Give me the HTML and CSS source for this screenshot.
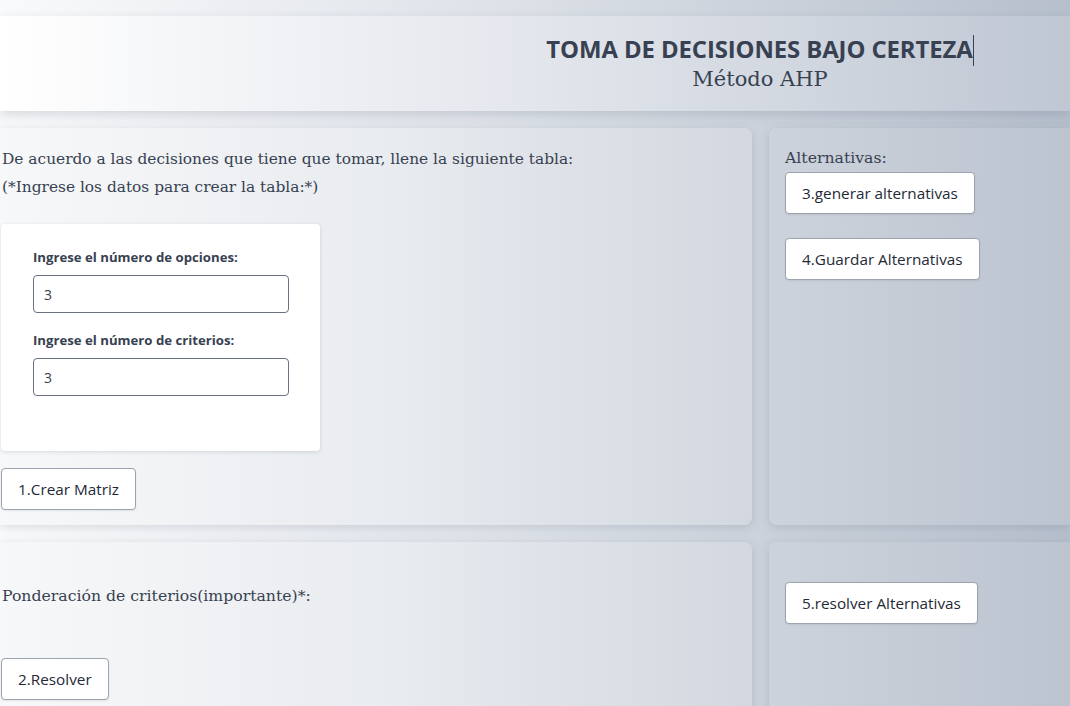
FILE: index.html
```html
<!DOCTYPE html>
<html lang="es">
<head>
<meta charset="utf-8">
<title>AHP</title>
<link rel="stylesheet" href="styles.css">
</head>
<body>
<header class="header">
  <div class="header-text">
    <h1 class="title">TOMA DE DECISIONES BAJO CERTEZA<span class="caret"></span></h1>
    <p class="subtitle">Método AHP</p>
  </div>
</header>
<main class="grid">
  <section class="card card-left">
    <p class="intro">De acuerdo a las decisiones que tiene que tomar, llene la siguiente tabla:<br>(*Ingrese los datos para crear la tabla:*)</p>
    <form class="form-box">
      <label class="label">Ingrese el número de opciones:</label>
      <input class="input" type="text" value="3">
      <label class="label label-2">Ingrese el número de criterios:</label>
      <input class="input" type="text" value="3">
    </form>
    <button class="btn">1.Crear Matriz</button>
  </section>
  <section class="card card-right">
    <p class="alt-title">Alternativas:</p>
    <button class="btn">3.generar alternativas</button>
    <button class="btn btn-gap">4.Guardar Alternativas</button>
  </section>
  <section class="card card-left card-bottom">
    <p class="pond">Ponderación de criterios(importante)*:</p>
    <button class="btn btn-resolver">2.Resolver</button>
  </section>
  <section class="card card-right card-bottom">
    <button class="btn btn-five">5.resolver Alternativas</button>
  </section>
</main>
</body>
</html>
```

FILE: styles.css
```css
html, body {
  margin: 0;
  padding: 0;
}
body {
  width: 1070px;
  height: 706px;
  overflow: hidden;
  background: linear-gradient(90deg, #f9fafb 0%, #dfe3e9 45%, #b6bfcc 100%);
  color: #374151;
  font-family: "DejaVu Serif", Georgia, serif;
}
.header {
  margin-top: 16px;
  height: 95px;
  background: linear-gradient(90deg, #ffffff 0%, #e3e6ec 50%, #bfc7d3 100%);
  box-shadow: 0 4px 10px rgba(71, 85, 105, 0.18);
  display: flex;
}
.header-text {
  padding-left: 450px;
  width: 620px;
  text-align: center;
}
.title {
  margin: 19px 0 0;
  font-family: "Open Sans", sans-serif;
  font-weight: 700;
  font-size: 23.9px;
  line-height: 28px;
  color: #374151;
  letter-spacing: -0.1px;
}
.caret {
  display: inline-block;
  width: 1px;
  height: 31px;
  background: #374151;
  vertical-align: -8px;
}
.subtitle {
  margin: -1px 0 0;
  font-family: "DejaVu Serif", serif;
  font-size: 21px;
  line-height: 28px;
  color: #374151;
}
.grid {
  display: grid;
  grid-template-columns: 752px 1fr;
  grid-template-rows: 397px 1fr;
  column-gap: 17px;
  row-gap: 17px;
  margin-top: 17px;
  height: 600px;
}
.card {
  border-radius: 8px;
  box-shadow: 0 2px 10px rgba(71, 85, 105, 0.18);
}
.card-left {
  border-top-left-radius: 0;
  border-bottom-left-radius: 0;
  background: linear-gradient(90deg, #f7f8f9 0%, #e9ecf0 50%, #d3d8e0 100%);
}
.card-right {
  border-top-right-radius: 0;
  border-bottom-right-radius: 0;
  background: linear-gradient(90deg, #cdd3dc 0%, #bcc4d0 100%);
  padding-left: 16px;
}
.intro {
  margin: 17px 0 0 2px;
  font-size: 15.4px;
  line-height: 28px;
}
.form-box {
  margin: 23px 0 0 1px;
  width: 319px;
  height: 227px;
  box-sizing: border-box;
  background: #fff;
  border-radius: 4px;
  box-shadow: 0 1px 4px rgba(0, 0, 0, 0.12);
  padding: 24px 32px 0;
  display: flex;
  flex-direction: column;
  align-items: flex-start;
}
.label {
  font-family: "Open Sans", sans-serif;
  font-weight: 700;
  font-size: 13.2px;
  line-height: 18px;
  color: #374151;
  margin-bottom: 9px;
}
.label-2 {
  margin-top: 18px;
}
.input {
  width: 256px;
  height: 38px;
  box-sizing: border-box;
  border: 1px solid #6b7280;
  border-radius: 4px;
  padding: 0 10px;
  font-family: "Open Sans", sans-serif;
  font-size: 14px;
  color: #374151;
  background: #fff;
}
.btn {
  display: block;
  height: 42px;
  box-sizing: border-box;
  padding: 0 16px;
  background: #fff;
  border: 1px solid #9ca3af;
  border-radius: 4px;
  box-shadow: 0 1px 2px rgba(0, 0, 0, 0.08);
  font-family: "Open Sans", sans-serif;
  font-weight: 500;
  font-size: 15.3px;
  color: #1f2937;
}
.card-left > .btn {
  margin: 17px 0 0 1px;
}
.alt-title {
  margin: 20px 0 0;
  font-size: 15.7px;
  line-height: 20px;
}
.card-right .btn {
  margin-top: 4px;
}
.card-right .btn-gap {
  margin-top: 24px;
}
.pond {
  margin: 44px 0 0 2px;
  font-size: 15.7px;
  line-height: 20px;
}
.card-left > .btn-resolver {
  margin-top: 52px;
}
.card-right .btn-five {
  margin-top: 40px;
}
```
